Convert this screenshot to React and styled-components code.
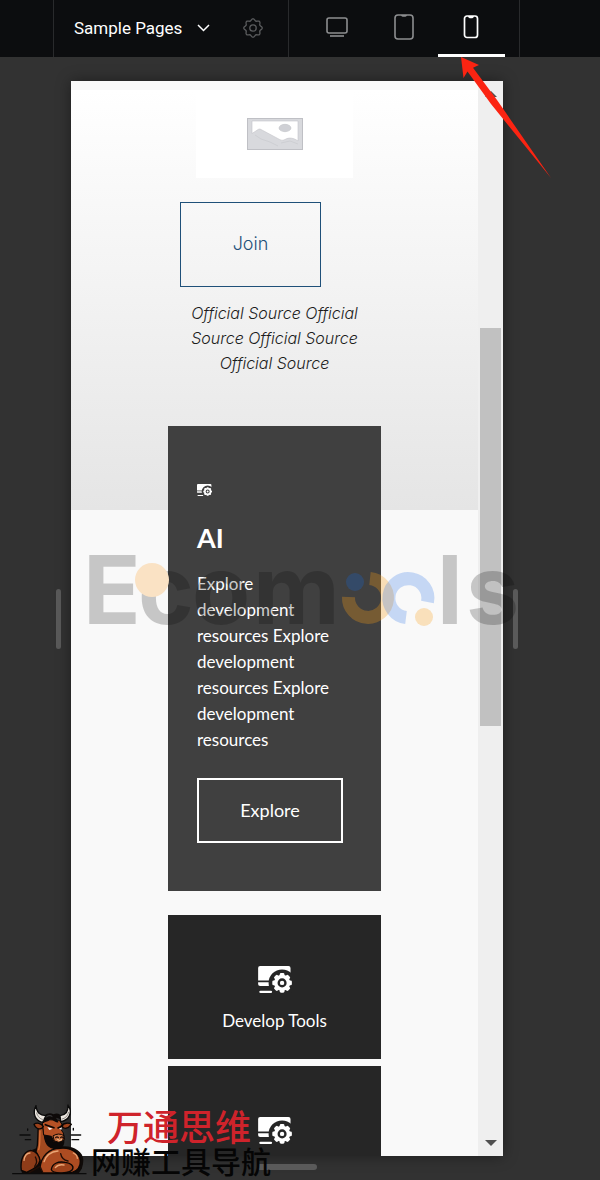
// App.jsx
import React, { useState } from "react";
import styled, { createGlobalStyle, css } from "styled-components";

// ===================== Global Styles =====================
const Global = createGlobalStyle`
  * { box-sizing: border-box; }
  body {
    margin: 0;
    background: #323232;
    font-family: Lato, "Noto Sans CJK SC", sans-serif;
  }
  button { appearance: none; margin: 0; padding: 0; border: 0; background: none; cursor: pointer; }
`;

const DEVICES = [
  { id: "desktop", label: "Desktop", Icon: DesktopIcon },
  { id: "tablet", label: "Tablet", Icon: TabletIcon },
  { id: "phone", label: "Phone", Icon: PhoneIcon },
];

const TILES = [
  { id: 1, label: "Develop Tools" },
  { id: 2 },
];

// ===================== App =====================
export default function App() {
  const [device, setDevice] = useState("phone");

  return (
    <AppWrap>
      <Global />
      <TopBar>
        <PagesGroup>
          <PagesButton>
            Sample Pages
            <ChevronIcon />
          </PagesButton>
          <IconButton aria-label="Page settings"><GearIcon /></IconButton>
        </PagesGroup>
        <DeviceGroup>
          {DEVICES.map(({ id, label, Icon }) => (
            <DeviceTab
              key={id}
              aria-label={label}
              aria-pressed={device === id}
              $active={device === id}
              onClick={() => setDevice(id)}
            >
              <Icon />
            </DeviceTab>
          ))}
        </DeviceGroup>
      </TopBar>

      <Stage>
        <SideHandle />
        <Frame>
          <Page>
            <Hero>
              <HeroImage><PlaceholderImage /></HeroImage>
              <JoinButton>Join</JoinButton>
              <Quote>Official Source Official Source Official Source Official Source</Quote>
            </Hero>
            <Cards>
              <FeatureCard>
                <ToolIcon width={15} height={12} bg="#404040" />
                <CardTitle>AI</CardTitle>
                <CardText>
                  Explore development resources Explore development resources Explore development resources
                </CardText>
                <ExploreButton>Explore</ExploreButton>
              </FeatureCard>
              <TileList>
                {TILES.map((t) => (
                  <Tile key={t.id} href="#tools">
                    <ToolIcon width={34} height={27} bg="#262626" />
                    {t.label}
                  </Tile>
                ))}
              </TileList>
            </Cards>
          </Page>
          <Scrollbar>
            <Arrow viewBox="0 0 12 6"><path d="M0 6L6 0l6 6z" fill="#505050" /></Arrow>
            <Track><Thumb /></Track>
            <Arrow viewBox="0 0 12 6"><path d="M0 0h12L6 6z" fill="#505050" /></Arrow>
          </Scrollbar>
        </Frame>
        <SideHandle />
        <BottomHandle />
      </Stage>

      <Watermark />
      <Pointer />
      <SiteMark>
        <Bull />
        <SiteNames>
          <SiteName>万通思维</SiteName>
          <SiteTag>网赚工具导航</SiteTag>
        </SiteNames>
      </SiteMark>
    </AppWrap>
  );
}

// ===================== Layout / UI =====================
const AppWrap = styled.div`
  position: relative;
  height: 100vh;
  display: flex; flex-direction: column;
  overflow: hidden;
  background: #323232;
`;

// Top bar
const TopBar = styled.header`
  display: flex; flex: none;
  height: 57px;
  padding-left: 53px;
  background: #0c0d0f;
`;
const PagesGroup = styled.div`
  display: flex; align-items: center; justify-content: space-between;
  width: 236px;
  padding: 0 25px 2px 20px;
  border-left: 1px solid #292a2c;
  border-right: 1px solid #292a2c;
`;
const PagesButton = styled.button`
  display: flex; align-items: center; gap: 15px;
  color: #fff;
  font: 400 17px/24px Roboto, sans-serif;
`;
const IconButton = styled.button`
  display: flex;
  color: #5b5c5e;
`;
const DeviceGroup = styled.nav`
  display: flex;
  padding: 0 14px 0 15px;
  border-right: 1px solid #292a2c;
`;
const DeviceTab = styled.button`
  && { padding: 0 2px 3px 0; }
  display: flex; align-items: center; justify-content: center;
  width: 67px;
  border-top: 3px solid transparent;
  border-bottom: 3px solid transparent;
  color: #8d8e90;
  ${(p) => p.$active && css`
    color: #fff;
    border-bottom-color: #fff;
  `}
`;

// Preview stage
const Stage = styled.main`
  flex: 1; min-height: 0;
  display: grid;
  grid-template-columns: auto minmax(0, 1fr) auto;
  grid-template-rows: minmax(0, 1fr) auto;
  gap: 8px 10px;
  padding: 24px 82px 10px 56px;
`;
const SideHandle = styled.div`
  align-self: center;
  width: 5px; height: 60px;
  border-radius: 3px;
  background: #5a5a5a;
`;
const BottomHandle = styled.div`
  grid-column: 2; justify-self: center;
  width: 60px; height: 6px;
  border-radius: 3px;
  background: #5a5a5a;
`;
const Frame = styled.section`
  display: flex;
  background: #f9f9f9;
  box-shadow: 0 0 14px rgba(0, 0, 0, 0.4);
`;
const Page = styled.div`
  flex: 1; min-width: 0;
  padding-top: 9px;
  overflow: hidden;
`;

// Hero
const Hero = styled.div`
  display: flex; flex-direction: column; align-items: center;
  height: 420px;
  background: linear-gradient(#fff, #e5e5e5);
`;
const HeroImage = styled.div`
  display: flex; align-items: center; justify-content: center;
  width: 157px; height: 88px;
  background: #fff;
`;
const JoinButton = styled.button`
  && {
    width: 141px; height: 85px;
    margin: 24px 48px 14px 0;
    padding-bottom: 2px;
    border: 1px solid #1f5079;
  }
  color: #1f5079;
  font: 300 18px/24px Inter, sans-serif;
`;
const Quote = styled.p`
  width: 176px;
  margin: 0;
  color: #1c1c1c;
  font: italic 300 16px/25px Inter, sans-serif;
  text-align: center;
`;

// Cards
const Cards = styled.div`
  display: flex; flex-direction: column; gap: 24px;
  width: 213px;
  margin: -84px auto 0;
`;
const FeatureCard = styled.article`
  display: flex; flex-direction: column; align-items: flex-start;
  padding: 58px 29px 48px;
  background: #404040;
  color: #fff;
`;
const CardTitle = styled.h2`
  margin: 24px 0 15px;
  font: 700 27px/36px Lato, sans-serif;
`;
const CardText = styled.p`
  margin: 0 0 25px;
  font-size: 17px; line-height: 26px;
`;
const ExploreButton = styled.button`
  && {
    width: 146px; height: 65px;
    padding-bottom: 2px;
    border: 2px solid #fff;
  }
  color: #fff;
  font: 400 18px/24px Lato, sans-serif;
`;
const TileList = styled.div`
  display: flex; flex-direction: column; gap: 7px;
`;
const Tile = styled.a`
  display: flex; flex-direction: column; align-items: center; gap: 16px;
  height: 144px;
  padding-top: 51px;
  background: #262626;
  color: #fff;
  font-size: 17px; line-height: 24px;
  text-decoration: none;
`;

// Scrollbar of the previewed page
const Scrollbar = styled.div`
  display: flex; flex-direction: column; align-items: center; gap: 8px;
  width: 25px;
  padding: 10px 2px;
  background: #efefef;
`;
const Arrow = styled.svg`
  flex: none;
  width: 12px; height: 6px;
`;
const Track = styled.div`
  flex: 1;
  width: 100%;
  padding-top: 223px;
`;
const Thumb = styled.div`
  height: 398px;
  background: #c1c1c1;
`;

// Overlays
const Overlay = styled.svg`
  position: absolute;
  pointer-events: none;
`;
const PointerSvg = styled(Overlay)`
  top: 57px; left: 460px;
`;
const WatermarkSvg = styled(Overlay)`
  top: 540px; left: 80px;
  overflow: visible;
  font: 700 95px Inter, sans-serif;
`;
const SiteMark = styled.div`
  position: absolute; left: 10px; bottom: 0;
  display: flex; align-items: flex-end;
`;
const SiteNames = styled.div`
  display: flex; flex-direction: column;
  margin-left: -4px;
  padding-bottom: 4px;
  font-family: "Noto Sans CJK SC", sans-serif;
  font-weight: 500;
  white-space: nowrap;
`;
const SiteName = styled.span`
  padding-left: 16px;
  color: #cf232b;
  font-size: 36px; line-height: 38px;
`;
const SiteTag = styled.span`
  color: #050505;
  font-size: 30px; line-height: 32px;
`;

// ===================== Icons =====================
function ChevronIcon() {
  return (
    <svg width="13" height="8" viewBox="0 0 13 8" fill="none" stroke="#fff" strokeWidth="1.5">
      <path d="M1 1l5.500 5.500L12 1" />
    </svg>
  );
}

// Cog outline with eight rounded lobes
const COG = Array.from({ length: 96 }, (_, i) => {
  const a = (i / 96) * Math.PI * 2;
  const r = 8.3 + 0.9 * Math.cos(8 * a);
  return `${(10 + r * Math.cos(a)).toFixed(2)},${(10 + r * Math.sin(a)).toFixed(2)}`;
}).join(" ");

function GearIcon() {
  return (
    <svg width="20" height="20" viewBox="0 0 20 20" fill="none" stroke="currentColor" strokeWidth="1.3">
      <polygon points={COG} strokeLinejoin="round" />
      <circle cx="10" cy="10" r="3.200" />
    </svg>
  );
}

function DesktopIcon() {
  return (
    <svg width="22" height="20" viewBox="0 0 22 20" fill="none" stroke="currentColor" strokeWidth="1.6">
      <rect x="1" y="1" width="20" height="15" rx="2" />
      <path d="M4 19h14" />
    </svg>
  );
}

function TabletIcon() {
  return (
    <svg width="20" height="26" viewBox="0 0 20 26" fill="none" stroke="currentColor" strokeWidth="1.6">
      <rect x="1" y="1" width="18" height="24" rx="3" />
      <path d="M7 1c.5 1.600 1 1.800 3 1.800s2.500-.2 3-1.800z" fill="currentColor" stroke="none" />
    </svg>
  );
}

function PhoneIcon() {
  return (
    <svg width="16" height="24" viewBox="0 0 16 24" fill="none" stroke="currentColor" strokeWidth="1.700">
      <rect x="1.500" y="1" width="13" height="21.500" rx="2.500" />
      <path d="M5 1c.4 1.900 1 2.300 3 2.300s2.600-.4 3-2.300z" fill="currentColor" stroke="none" />
    </svg>
  );
}

function PlaceholderImage() {
  return (
    <svg width="56" height="32" viewBox="0 0 56 32" role="img" aria-label="Placeholder">
      <rect x=".5" y=".5" width="55" height="31" fill="#d8d9dd" stroke="#bfc0c5" />
      <path d="M5 3h46v20c-4-3-9-4-13-1.500-1.500.8-3 1-5 .2L14 11.500c-1-.6-2-.6-3 .1L5 15.500z" fill="#fff" stroke="#c4c5ca" strokeWidth=".6" />
      <ellipse cx="38" cy="10" rx="6" ry="3.700" fill="#cfd0d5" stroke="#bbbcc1" strokeWidth=".5" />
      <path d="M8 17l6 4 9 3 8 4M34 25l9-2 8 3" fill="none" stroke="#c9cace" strokeWidth=".7" />
    </svg>
  );
}

// Screen with a cog in front of its lower right corner
function ToolIcon({ width, height, bg }) {
  return (
    <svg width={width} height={height} viewBox="0 0 100 80" fill="#fff">
      <path d="M6 0h84q6 0 6 6v37H0V6q0-6 6-6z" />
      <path d="M0 48h40v11H6q-6 0-6-6z" />
      <circle cx="71" cy="50" r="40" fill={bg} />
      <path d="M7 76.500h31" stroke="#fff" strokeWidth="7" strokeLinecap="round" />
      <circle cx="71" cy="50" r="24" />
      {[0, 45, 90, 135].map((a) => (
        <rect key={a} x="64" y="21" width="14" height="58" rx="4" transform={`rotate(${a} 71 50)`} />
      ))}
      <circle cx="71" cy="50" r="10" stroke={bg} strokeWidth="7" />
    </svg>
  );
}

// ===================== Overlays =====================
function Pointer() {
  return (
    <PointerSvg width="92" height="122" viewBox="0 0 92 122">
      <path d="M1 0L19 8l-6 2.700L37 43l54 78L31 47 7.500 14.500 3.500 21z" fill="#fb2412" />
    </PointerSvg>
  );
}

function Watermark() {
  return (
    <WatermarkSvg width="440" height="95" viewBox="0 0 440 95" aria-hidden="true">
      <g opacity=".2">
        <text x="3" y="84">E</text>
        <text x="58" y="84">c</text>
        <text x="112" y="84">o</text>
        <text x="173" y="84">m</text>
        <text x="357" y="84">l</text>
        <text x="386" y="84">s</text>
      </g>
      <circle cx="72" cy="40" r="17" fill="#fae2c4" />
      <g fill="none" strokeWidth="13">
        <path d="M290 38.500A19.500 19.500 0 1 1 268.500 57" stroke="#f59b16" opacity=".3" />
        <path d="M326 77.500A19.500 19.500 0 1 1 347.500 62" stroke="#3f82e8" opacity=".28" />
      </g>
      <circle cx="275" cy="42" r="9" fill="#1c64c8" opacity=".3" />
      <circle cx="344" cy="77" r="9" fill="#f9a52c" opacity=".3" />
    </WatermarkSvg>
  );
}

// Muscular bull, arms crossed
function Bull() {
  return (
    <svg width="85" height="85" viewBox="0 0 255 255" strokeLinejoin="round" strokeLinecap="round">
      <path d="M30 120h30M46 134h16M184 120h28M186 134h20M53 102v4M190 100v5M213 215v6" stroke="#0b0b0b" strokeWidth="4" />
      <path d="M8 236h220" stroke="#0b0b0b" strokeWidth="4" />
      <path d="M36 235c-6-22 0-55 24-68l30-12h60c36-6 70 14 70 40 0 18-6 30-14 40z" fill="#0f0a08" />
      {/* neck */}
      <path d="M86 92c-6 28 2 44-8 78 8 12 12 26 14 40 8-26 22-42 44-50-16-4-28-14-32-34l-4-28z" fill="#a34a20" stroke="#0c0705" strokeWidth="4" />
      <path d="M90 108c-2 22 2 38-4 56" fill="none" stroke="#d9743c" strokeWidth="4" />
      {/* torso and arms */}
      <path d="M34 226c-4-30 6-56 28-60 16 2 26 16 28 30-4 20-24 28-40 36z" fill="#8e3c19" stroke="#0c0705" strokeWidth="4" />
      <path d="M90 222c2-40 28-62 60-62 38-4 66 20 60 48-4 18-18 26-40 26h-72z" fill="#ad4c22" stroke="#0c0705" strokeWidth="4" />
      <path d="M124 224c2-18 20-26 42-22 16 2 26 10 22 20-4 14-60 16-64 2z" fill="#9d421b" stroke="#0c0705" strokeWidth="4" />
      <path d="M42 196c2-14 8-22 18-22M102 200c6-18 22-30 42-32M190 174c8 4 12 10 12 16M136 218c6-8 16-10 26-8" fill="none" stroke="#eaa675" strokeWidth="4" />
      <path d="M152 176c2 12 12 20 22 22M76 186c6 10 4 20-2 28M58 232l32-18 8 18" fill="none" stroke="#210d05" strokeWidth="4" />
      {/* beard, face, muzzle */}
      <path d="M102 118c0 30 14 46 38 44 20-2 26-14 22-34l-20-20z" fill="#0d0807" />
      <path d="M98 84l16-10 34 2 8 12-4 14 8 12 4 20-14 8-18-2-8-16-22-4z" fill="#b65125" stroke="#0c0705" strokeWidth="3" />
      <path d="M130 122q16-10 32 0l-4 16-12 4-12-4z" fill="#cc7444" stroke="#0c0705" strokeWidth="3" />
      <path d="M137 128q4-5 8 0M152 128q4-5 7 0" fill="none" stroke="#28100a" strokeWidth="4" />
      <path d="M143 134q6 6 12 0" fill="none" stroke="#f0d3a8" strokeWidth="3" />
      {/* ears, brow, eyes */}
      <path d="M72 88c8-6 20-4 28 6-6 12-22 10-28-6zM184 88c-8-6-22-4-30 4 6 12 20 10 30-4z" fill="#9d421b" stroke="#0c0705" strokeWidth="4" />
      <path d="M106 89l26 9M158 92l-14 7" stroke="#0c0705" strokeWidth="5" />
      <path d="M112 96l16 5-10 4zM147 101l9-4-2 7z" fill="#fff" />
      <path d="M98 78c-2-20 20-28 32-20 18-8 28 6 20 14l-12-4 8 14c-14 2-16-10-26-10-2 8-14 10-22 6z" fill="#0d0908" />
      <path d="M106 68c6-6 14-8 20-4" fill="none" stroke="#67686b" strokeWidth="2" />
      {/* horns */}
      <path d="M98 82c-22-4-32-26-20-50 2 22 12 28 30 30zM152 80c24-4 38-26 22-50 2 22-10 30-24 32z" fill="#ebe6df" stroke="#0b0b0b" strokeWidth="4" />
      <path d="M80 54c4 12 10 18 20 20M176 52c-4 12-10 18-20 20" fill="none" stroke="#8b8783" strokeWidth="3" />
    </svg>
  );
}
